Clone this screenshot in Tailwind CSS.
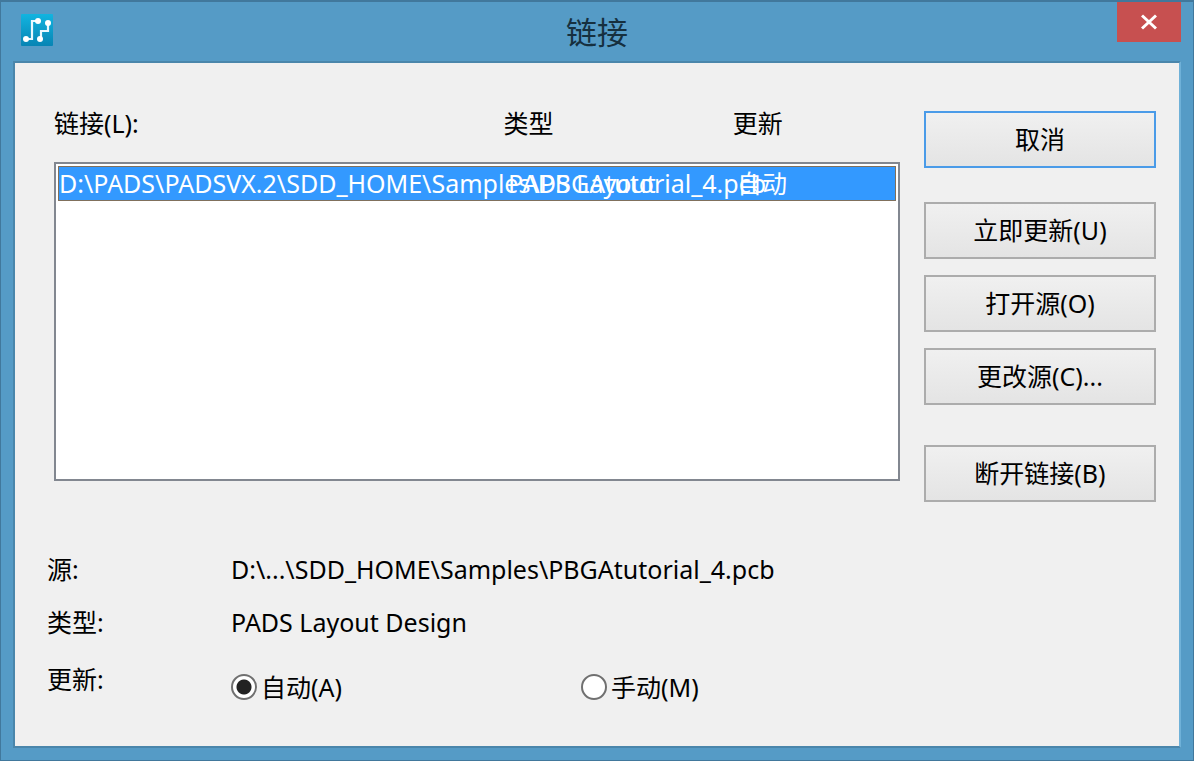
<!DOCTYPE html>
<html lang="zh-CN">
<head>
    <meta charset="UTF-8">
    <meta name="viewport" content="width=device-width, initial-scale=1.0">
    <title>链接</title>
    <script src="https://cdn.jsdelivr.net/npm/@tailwindcss/browser@4"></script>
</head>
<body class="font-['Noto_Sans','Noto_Sans_CJK_SC',sans-serif] text-[25px] leading-8 text-black">

    <div class="flex flex-col min-h-screen bg-[#559bc6] border border-t-2 border-[#41789c] px-3 pb-3" role="dialog" aria-labelledby="title">

        <!-- Title bar -->
        <header class="flex items-start h-[59px]">
            <div class="w-[72px] pt-3 pl-2">
                <svg class="w-8 h-8" viewBox="0 0 32 32" fill="none">
                    <defs>
                        <linearGradient id="logoBg" x1="0" y1="0" x2="0" y2="1">
                            <stop offset="0" stop-color="#12b4e0"/>
                            <stop offset="1" stop-color="#0784b4"/>
                        </linearGradient>
                    </defs>
                    <rect width="32" height="32" rx="1" fill="url(#logoBg)"/>
                    <path d="M5 25H11V7H17M20 25V17H27V9" stroke="#e8f8ff" stroke-width="2.2"/>
                    <g fill="#fff">
                        <circle cx="5" cy="25" r="3"/>
                        <circle cx="17" cy="7" r="3"/>
                        <circle cx="27" cy="9" r="3"/>
                        <circle cx="19" cy="25" r="3"/>
                    </g>
                </svg>
            </div>
            <h1 id="title" class="flex-1 pt-2.5 text-center text-[31px] leading-10 text-[#16303f]">链接</h1>
            <div class="w-[72px] flex justify-end">
                <button type="button" aria-label="关闭" class="flex items-center justify-center w-16 h-10 bg-[#c75050]">
                    <svg class="w-4 h-4" viewBox="0 0 16 16" fill="none" stroke="#fff" stroke-width="3">
                        <path d="M1 1.5L15 14.5M15 1.5L1 14.5"/>
                    </svg>
                </button>
            </div>
        </header>

        <!-- Dialog body -->
        <main class="flex-1 flex flex-col bg-[#f0f0f0] border-2 border-[#4a86ab] border-r-[#6fb1d8] pt-11 pl-8 pr-[23px]">
            <div class="flex gap-6 pl-[7px]">
                <section class="flex-1 min-w-0">
                    <div class="grid grid-cols-[minmax(0,449fr)_minmax(0,229fr)_minmax(0,167fr)] mb-[23px]">
                        <span id="lblLinks">链接(L):</span>
                        <span>类型</span>
                        <span>更新</span>
                    </div>
                    <div class="h-[319px] bg-white border-2 border-[#828790] p-0.5" role="listbox" aria-labelledby="lblLinks">
                        <div class="grid grid-cols-[minmax(0,449fr)_minmax(0,229fr)_minmax(0,158fr)] h-[35px] bg-[#3399ff] border border-[#80705c] text-white whitespace-nowrap" role="option" aria-selected="true">
                            <span>D:\PADS\PADSVX.2\SDD_HOME\Samples\PBGAtutorial_4.pcb</span>
                            <span>PADS Layout</span>
                            <span>自动</span>
                        </div>
                    </div>
                </section>

                <div class="flex flex-col gap-4 w-[232px] pt-1">
                    <button type="button" class="h-[57px] mb-[18px] pb-0.5 border-2 border-[#4a9be8] bg-linear-to-b from-[#f0f0f0] to-[#e4e4e4]">取消</button>
                    <button type="button" class="h-[57px] pb-0.5 border-2 border-[#acacac] bg-linear-to-b from-[#f0f0f0] to-[#e4e4e4]">立即更新(U)</button>
                    <button type="button" class="h-[57px] pb-0.5 border-2 border-[#acacac] bg-linear-to-b from-[#f0f0f0] to-[#e4e4e4]">打开源(O)</button>
                    <button type="button" class="h-[57px] pb-0.5 border-2 border-[#acacac] bg-linear-to-b from-[#f0f0f0] to-[#e4e4e4]">更改源(C)...</button>
                    <button type="button" class="h-[57px] mt-6 pb-0.5 border-2 border-[#acacac] bg-linear-to-b from-[#f0f0f0] to-[#e4e4e4]">断开链接(B)</button>
                </div>
            </div>

            <!-- Details of the selected link -->
            <dl class="grid grid-cols-[184px_1fr] gap-y-[21px] mt-[51px]">
                <dt>源:</dt>
                <dd>D:\...\SDD_HOME\Samples\PBGAtutorial_4.pcb</dd>
                <dt>类型:</dt>
                <dd>PADS Layout Design</dd>
                <dt class="pt-1">更新:</dt>
                <dd class="flex pt-3">
                    <label class="flex items-center gap-1 w-[350px]">
                        <input type="radio" name="update" checked class="appearance-none size-[26px] rounded-full border-2 border-[#707070] bg-white checked:bg-[radial-gradient(circle,#222_7px,#fff_8px)]">
                        自动(A)
                    </label>
                    <label class="flex items-center gap-1">
                        <input type="radio" name="update" class="appearance-none size-[26px] rounded-full border-2 border-[#707070] bg-white checked:bg-[radial-gradient(circle,#222_7px,#fff_8px)]">
                        手动(M)
                    </label>
                </dd>
            </dl>
        </main>
    </div>

</body>
</html>
